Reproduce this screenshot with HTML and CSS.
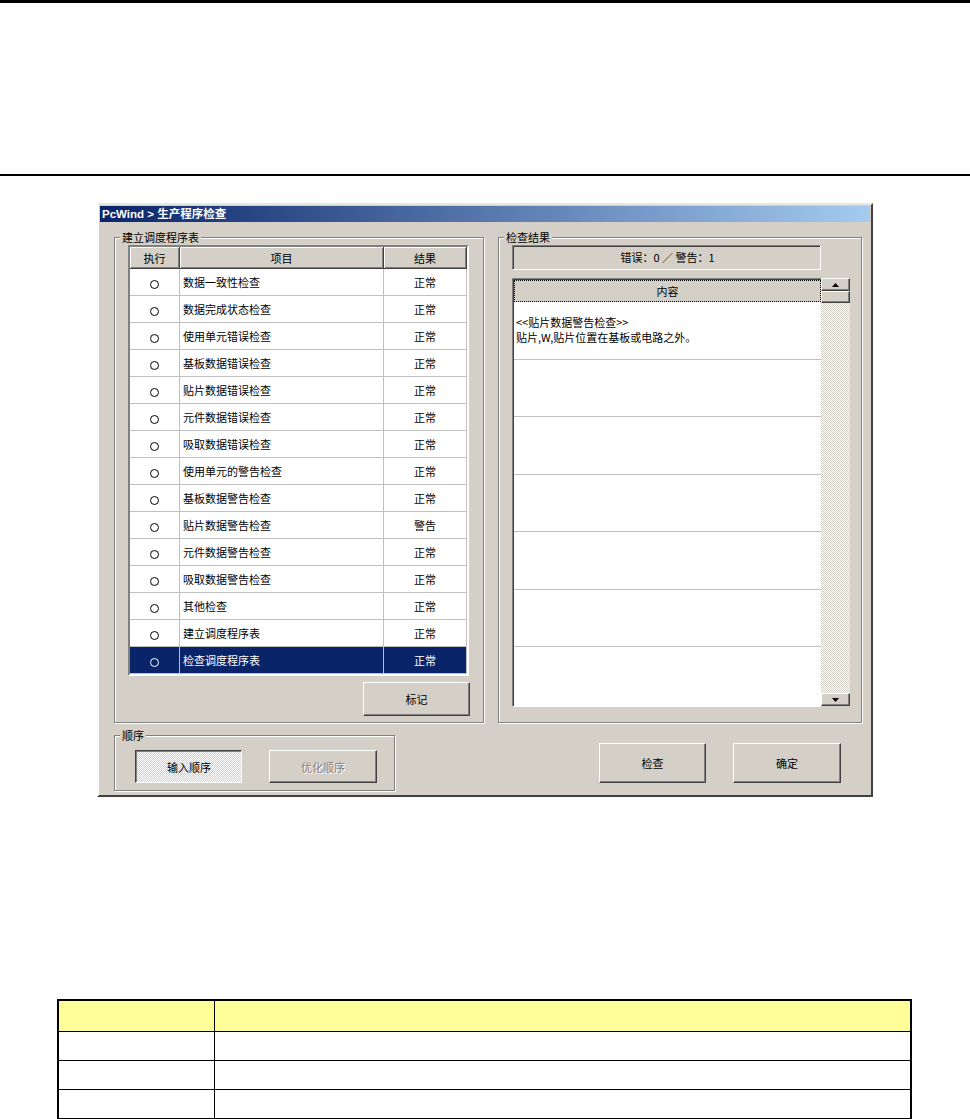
FILE: index.html
```html
<!DOCTYPE html>
<html lang="zh-CN">
<head>
<meta charset="UTF-8" />
<meta name="viewport" content="width=device-width, initial-scale=1" />
<title>生产程序检查</title>
<link rel="stylesheet" href="styles.css">
</head>
<body>
  <div class="rule-top"></div>
  <div class="rule"></div>

  <div class="dialog">
    <div class="titlebar">PcWind &gt; 生产程序检查</div>
    <div class="dlg-body">

      <div class="group group-sched">
        <span class="group-label">建立调度程序表</span>
        <table class="grid">
          <colgroup>
            <col class="c-run" />
            <col class="c-item" />
            <col class="c-res" />
          </colgroup>
          <thead>
            <tr><th>执行</th><th>项目</th><th>结果</th></tr>
          </thead>
          <tbody>
            <tr><td><span class="dot"></span></td><td class="name">数据一致性检查</td><td>正常</td></tr>
            <tr><td><span class="dot"></span></td><td class="name">数据完成状态检查</td><td>正常</td></tr>
            <tr><td><span class="dot"></span></td><td class="name">使用单元错误检查</td><td>正常</td></tr>
            <tr><td><span class="dot"></span></td><td class="name">基板数据错误检查</td><td>正常</td></tr>
            <tr><td><span class="dot"></span></td><td class="name">贴片数据错误检查</td><td>正常</td></tr>
            <tr><td><span class="dot"></span></td><td class="name">元件数据错误检查</td><td>正常</td></tr>
            <tr><td><span class="dot"></span></td><td class="name">吸取数据错误检查</td><td>正常</td></tr>
            <tr><td><span class="dot"></span></td><td class="name">使用单元的警告检查</td><td>正常</td></tr>
            <tr><td><span class="dot"></span></td><td class="name">基板数据警告检查</td><td>正常</td></tr>
            <tr><td><span class="dot"></span></td><td class="name">贴片数据警告检查</td><td>警告</td></tr>
            <tr><td><span class="dot"></span></td><td class="name">元件数据警告检查</td><td>正常</td></tr>
            <tr><td><span class="dot"></span></td><td class="name">吸取数据警告检查</td><td>正常</td></tr>
            <tr><td><span class="dot"></span></td><td class="name">其他检查</td><td>正常</td></tr>
            <tr><td><span class="dot"></span></td><td class="name">建立调度程序表</td><td>正常</td></tr>
            <tr class="selected"><td><span class="dot"></span></td><td class="name">检查调度程序表</td><td>正常</td></tr>
          </tbody>
        </table>
        <div class="mark-row">
          <button class="btn btn-mark">标记</button>
        </div>
      </div>

      <div class="group group-result">
        <span class="group-label">检查结果</span>
        <div class="status">错误：0 ／ 警告：1</div>
        <div class="listwrap">
          <div class="list">
            <div class="list-inner">
              <div class="list-head">内容</div>
              <div class="list-row">
                <div class="msg">&lt;&lt;贴片数据警告检查&gt;&gt;</div>
                <div class="msg">贴片,W,贴片位置在基板或电路之外。</div>
              </div>
              <div class="list-row"></div>
              <div class="list-row"></div>
              <div class="list-row"></div>
              <div class="list-row"></div>
              <div class="list-row"></div>
              <div class="list-row last"></div>
            </div>
          </div>
          <div class="scrollbar">
            <div class="sb-btn">
              <svg width="7" height="4" viewBox="0 0 7 4"><polygon points="3.5,0 7,4 0,4" fill="#000"/></svg>
            </div>
            <div class="sb-thumb"></div>
            <div class="sb-track"></div>
            <div class="sb-btn">
              <svg width="7" height="4" viewBox="0 0 7 4"><polygon points="0,0 7,0 3.5,4" fill="#000"/></svg>
            </div>
          </div>
        </div>
      </div>

      <div class="group group-order">
        <span class="group-label">顺序</span>
        <button class="btn btn-pressed">输入顺序</button>
        <button class="btn btn-disabled">优化顺序</button>
      </div>

      <div class="actions">
        <button class="btn btn-act">检查</button>
        <button class="btn btn-act wide">确定</button>
      </div>

    </div>
  </div>

  <table class="doc-table">
    <tr class="doc-head"><td class="first"></td><td></td></tr>
    <tr><td class="first"></td><td></td></tr>
    <tr><td class="first"></td><td></td></tr>
    <tr><td class="first"></td><td></td></tr>
  </table>
</body>
</html>
```

FILE: styles.css
```css
body {
  margin: 0;
  background: #fff;
  font-family: "Noto Sans CJK SC", "Liberation Sans", sans-serif;
  font-size: 11px;
  color: #000;
}
.rule-top {
  height: 3px;
  background: #000;
  margin-bottom: 171px;
}
.rule {
  height: 2px;
  background: #000;
}

/* dialog window */
.dialog {
  width: 772px;
  height: 590px;
  box-sizing: content-box;
  margin: 27px 0 0 97px;
  background: #d4d0c8;
  border: 2px solid;
  border-color: #e8e6e0 #404040 #404040 #fff;
}
.titlebar {
  margin: 1px 1px 0;
  height: 16px;
  line-height: 16px;
  padding-left: 2px;
  color: #fff;
  font-weight: bold;
  font-family: "Liberation Sans", "Noto Sans CJK SC", sans-serif;
  font-size: 11.5px;
  background: linear-gradient(to right, #0a246a, #a6caf0);
}
.dlg-body {
  display: grid;
  grid-template-columns: 370px 364px;
  grid-template-rows: 486px 56px;
  column-gap: 14px;
  row-gap: 12px;
  padding: 15px 0 0 15px;
}

/* etched group boxes */
.group {
  position: relative;
  border: 1px solid #808080;
  box-shadow: inset 1px 1px 0 #fff, 1px 1px 0 #fff;
  box-sizing: border-box;
}
.group-label {
  position: absolute;
  top: -8px;
  left: 5px;
  padding: 0 2px;
  line-height: 14px;
  background: #d4d0c8;
}
.group-sched {
  padding: 7px 0 0 13px;
}
.group-result {
  padding: 7px 0 0 13px;
}
.group-order {
  width: 281px;
  display: flex;
  gap: 27px;
  padding: 14px 0 0 20px;
}

/* schedule grid */
.grid {
  width: 341px;
  table-layout: fixed;
  border-collapse: separate;
  border-spacing: 0;
  border: 2px solid;
  border-color: #808080 #fff #fff #808080;
  background: #fff;
}
.c-run { width: 50px; }
.c-item { width: 204px; }
.c-res { width: 83px; }
.grid th {
  height: 22px;
  padding: 0;
  font-weight: normal;
  background: #d4d0c8;
  border-right: 1px solid #404040;
  border-bottom: 1px solid #404040;
  box-shadow: inset 1px 1px 0 #fff, inset -1px -1px 0 #808080;
  box-sizing: border-box;
}
.grid td {
  height: 27px;
  padding: 0;
  text-align: center;
  border-right: 1px solid #c0c0c0;
  border-bottom: 1px solid #c0c0c0;
  box-sizing: border-box;
}
.grid td.name {
  text-align: left;
  padding-left: 3px;
}
.grid tr.selected td {
  background: #0a246a;
  color: #fff;
}
.dot {
  display: inline-block;
  width: 7px;
  height: 7px;
  border: 1px solid #000;
  border-radius: 50%;
  vertical-align: middle;
}
.selected .dot {
  border-color: #fff;
}
.mark-row {
  width: 342px;
  display: flex;
  justify-content: flex-end;
  margin-top: 6px;
}

/* buttons */
.btn {
  font-family: "Noto Sans CJK SC", sans-serif;
  font-size: 11px;
  color: #000;
  background: #d4d0c8;
  border: 1px solid;
  border-color: #fff #404040 #404040 #fff;
  box-shadow: inset -1px -1px 0 #808080;
  padding: 0;
  width: 107px;
  height: 33px;
}
.btn-mark {
  height: 34px;
}
.btn-pressed {
  border-color: #404040 #fff #fff #404040;
  box-shadow: inset 1px 1px 0 #808080;
  padding: 1px 0 0 1px;
  background: repeating-conic-gradient(#fff 0 25%, #d4d0c8 0 50%) 0 0 / 2px 2px;
}
.btn-disabled {
  width: 108px;
  color: #808080;
  text-shadow: 1px 1px 0 #fff;
}
.actions {
  display: flex;
  gap: 27px;
  padding: 8px 0 0 101px;
}
.btn-act {
  height: 40px;
}
.btn-act.wide {
  width: 108px;
}

/* result panel */
.status {
  width: 309px;
  height: 25px;
  box-sizing: border-box;
  line-height: 22px;
  text-align: center;
  border: 1px solid;
  border-color: #808080 #fff #fff #808080;
  box-shadow: inset 1px 1px 0 #404040;
  padding-left: 2px;
}
.listwrap {
  display: flex;
  margin-top: 8px;
  height: 429px;
}
.list {
  width: 309px;
  height: 429px;
  box-sizing: border-box;
  border-top: 1px solid #808080;
  border-left: 1px solid #808080;
  border-bottom: 1px solid #fff;
  overflow: hidden;
}
.list-inner {
  height: 100%;
  box-sizing: border-box;
  border-top: 1px solid #404040;
  border-left: 1px solid #404040;
  background: #fff;
  overflow: hidden;
}
.list-head {
  height: 22px;
  box-sizing: border-box;
  line-height: 20px;
  text-align: center;
  background: #d4d0c8;
  border: 1px dotted #000;
}
.list-row {
  height: 57.5px;
  box-sizing: border-box;
  border-bottom: 1px solid #c0c0c0;
  padding: 13px 0 0 2px;
  white-space: nowrap;
}
.msg {
  line-height: 15px;
}
.list-row.last {
  border-bottom: 0;
}
.scrollbar {
  width: 29px;
  height: 428px;
  display: flex;
  flex-direction: column;
}
.sb-btn,
.sb-thumb {
  height: 13px;
  box-sizing: border-box;
  background: #d4d0c8;
  border: 1px solid;
  border-color: #fff #404040 #404040 #fff;
  box-shadow: inset -1px -1px 0 #808080;
  display: flex;
  align-items: center;
  justify-content: center;
}
.sb-thumb {
  height: 12px;
}
.sb-track {
  flex: 1;
  background: repeating-conic-gradient(#fff 0 25%, #d4d0c8 0 50%) 0 0 / 2px 2px;
}

/* document table under the screenshot */
.doc-table {
  margin: 202px 0 0 57px;
  width: 855px;
  border-collapse: collapse;
  border: 2px solid #000;
}
.doc-table td {
  height: 28px;
  padding: 0;
  border: 1px solid #000;
}
.doc-table td.first {
  width: 155px;
}
.doc-head td {
  height: 30px;
  background: #ffff99;
}
```
